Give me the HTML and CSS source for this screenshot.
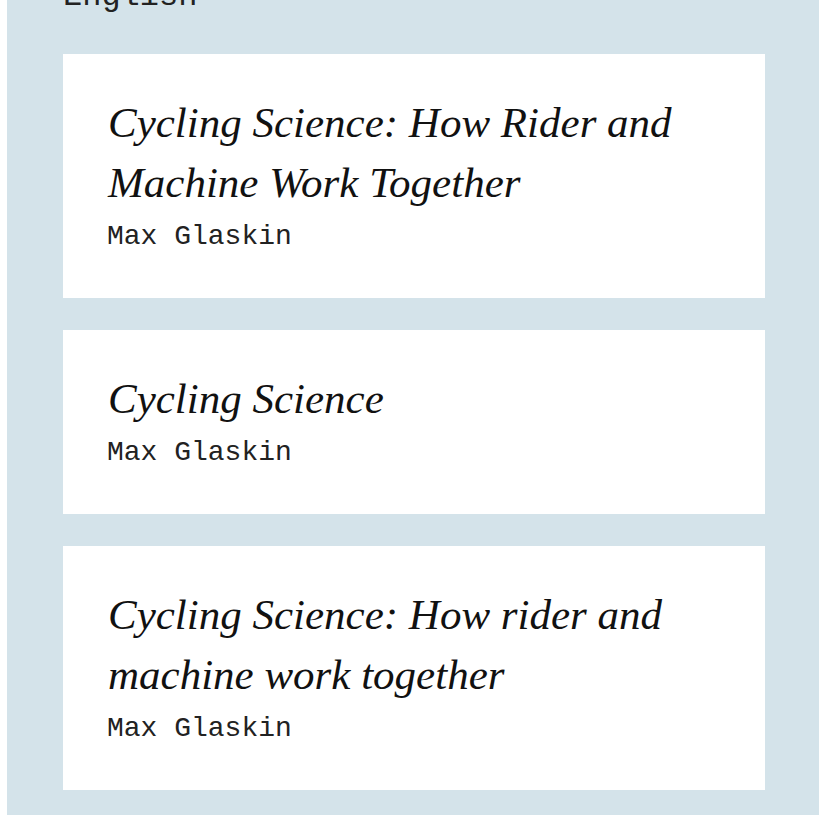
FILE: index.html
```html
<!DOCTYPE html>
<html lang="en">
<head>
  <meta charset="UTF-8">
  <meta name="viewport" content="width=device-width, initial-scale=1.0">
  <title>Books - Cycling</title>
  <link rel="stylesheet" href="styles.css">
</head>
<body>
  <section class="shelf">
    <h2 class="lang">English</h2>
    <ul class="books">
      <li class="book">
        <h3 class="book-title">Cycling Science: How Rider and Machine Work Together</h3>
        <p class="book-author">Max Glaskin</p>
      </li>
      <li class="book">
        <h3 class="book-title">Cycling Science</h3>
        <p class="book-author">Max Glaskin</p>
      </li>
      <li class="book">
        <h3 class="book-title">Cycling Science: How rider and machine work together</h3>
        <p class="book-author">Max Glaskin</p>
      </li>
    </ul>
  </section>
</body>
</html>
```

FILE: styles.css
```css
body {
  margin: 0;
  font-family: "Liberation Serif", serif;
  color: #111;
  overflow: hidden;
}

.shelf {
  margin: 0 9px 0 7px;
  padding: 0 54px 60px 56px;
  background: #d4e3ea;
}

.lang {
  font: 400 32px/1 "Liberation Mono", monospace;
  color: #222;
  margin: -19px 0 41px;
}

.books {
  list-style: none;
  margin: 0;
  padding: 0;
  display: flex;
  flex-direction: column;
  gap: 32px;
}

.book {
  background: #fff;
  padding: 39px 45px 45px;
}

.book-title {
  font-size: 43px;
  font-style: italic;
  font-weight: 400;
  line-height: 60px;
  margin: 0;
}

.book-author {
  font: 400 28px/32px "Liberation Mono", monospace;
  color: #222;
  margin: 8px 0 0 -1px;
}
```
